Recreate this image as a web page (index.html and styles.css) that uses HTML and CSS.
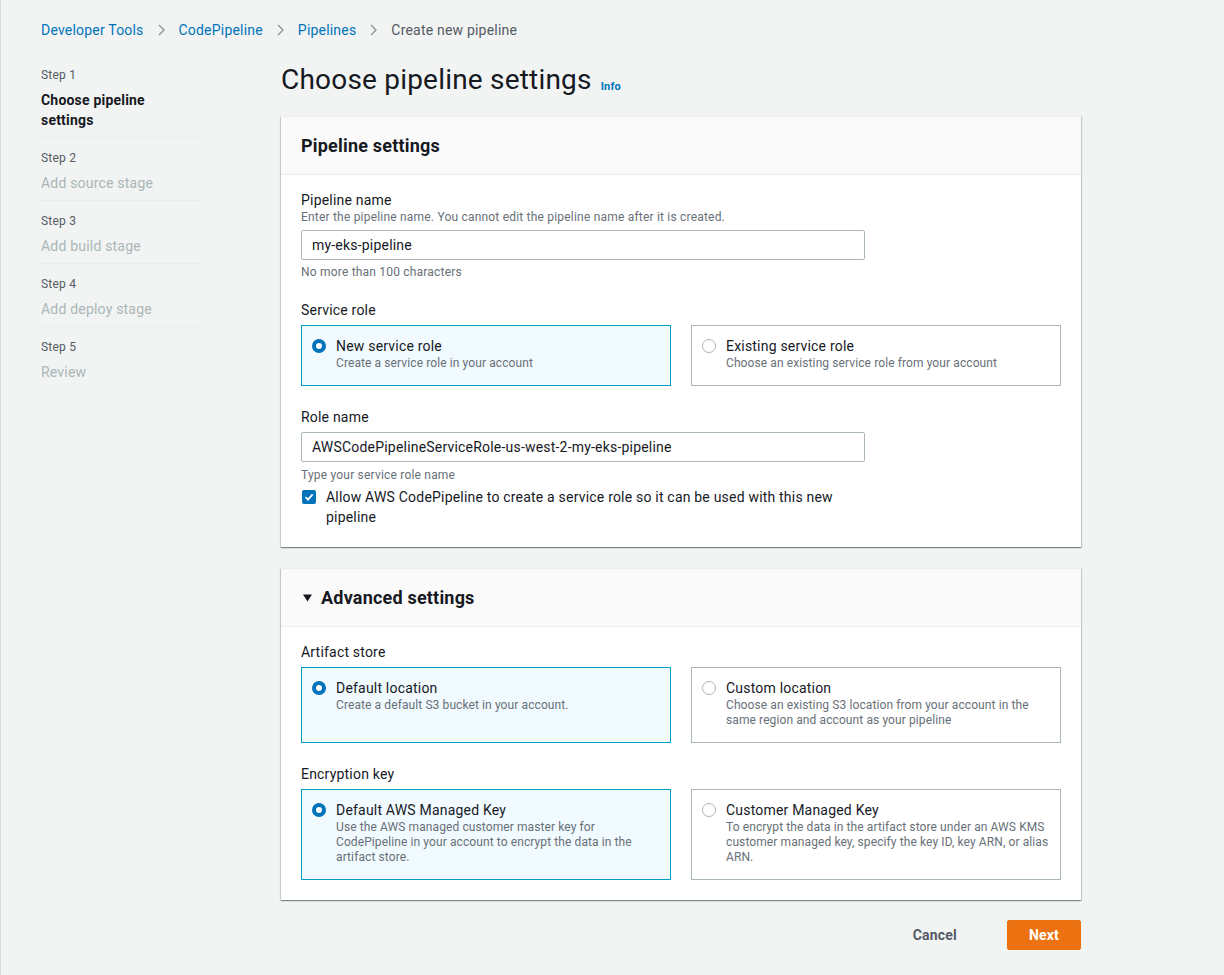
FILE: index.html
```html
<!DOCTYPE html>
<html lang="en">
<head>
  <meta charset="UTF-8">
  <meta name="viewport" content="width=device-width, initial-scale=1.0">
  <title>Create new pipeline</title>
  <link rel="stylesheet" href="styles.css">
</head>
<body>

<div class="app">
  <nav class="crumbs">
    <a href="#">Developer Tools</a>
    <svg class="chev" width="7" height="12" viewBox="0 0 7 12"><polyline points="1,1 6,6 1,11" fill="none" stroke="#879596" stroke-width="1.3"/></svg>
    <a href="#">CodePipeline</a>
    <svg class="chev" width="7" height="12" viewBox="0 0 7 12"><polyline points="1,1 6,6 1,11" fill="none" stroke="#879596" stroke-width="1.3"/></svg>
    <a href="#">Pipelines</a>
    <svg class="chev" width="7" height="12" viewBox="0 0 7 12"><polyline points="1,1 6,6 1,11" fill="none" stroke="#879596" stroke-width="1.3"/></svg>
    <span class="current">Create new pipeline</span>
  </nav>

  <div class="layout">
    <ul class="steps">
      <li class="step active">
        <div class="step-num">Step 1</div>
        <div class="step-title">Choose pipeline settings</div>
      </li>
      <li class="step">
        <div class="step-num">Step 2</div>
        <div class="step-title">Add source stage</div>
      </li>
      <li class="step">
        <div class="step-num">Step 3</div>
        <div class="step-title">Add build stage</div>
      </li>
      <li class="step">
        <div class="step-num">Step 4</div>
        <div class="step-title">Add deploy stage</div>
      </li>
      <li class="step last">
        <div class="step-num">Step 5</div>
        <div class="step-title">Review</div>
      </li>
    </ul>

    <main class="main">
      <h1 class="page-title">Choose pipeline settings <a class="info" href="#">Info</a></h1>

      <section class="panel">
        <div class="panel-head"><h2>Pipeline settings</h2></div>
        <div class="panel-body">
          <div class="field-label">Pipeline name</div>
          <div class="field-desc">Enter the pipeline name. You cannot edit the pipeline name after it is created.</div>
          <input class="text-input" type="text" value="my-eks-pipeline">
          <div class="field-hint">No more than 100 characters</div>

          <div class="field-label spaced">Service role</div>
          <div class="tiles">
            <label class="tile selected">
              <span class="radio on"></span>
              <span class="tile-text">
                <span class="tile-title">New service role</span>
                <span class="tile-desc">Create a service role in your account</span>
              </span>
            </label>
            <label class="tile">
              <span class="radio"></span>
              <span class="tile-text">
                <span class="tile-title">Existing service role</span>
                <span class="tile-desc">Choose an existing service role from your account</span>
              </span>
            </label>
          </div>

          <div class="field-label spaced">Role name</div>
          <input class="text-input gap-top" type="text" value="AWSCodePipelineServiceRole-us-west-2-my-eks-pipeline">
          <div class="field-hint loose">Type your service role name</div>
          <label class="check-row">
            <span class="checkbox">
              <svg width="10" height="10" viewBox="0 0 10 10"><polyline points="1.5,5.2 4,7.6 8.6,2.4" fill="none" stroke="#fff" stroke-width="1.8"/></svg>
            </span>
            <span class="check-text">Allow AWS CodePipeline to create a service role so it can be used with this new pipeline</span>
          </label>
        </div>
      </section>

      <section class="panel">
        <div class="panel-head">
          <h2>
            <svg class="caret" width="9" height="8" viewBox="0 0 9 8"><polygon points="0,0.5 9,0.5 4.5,7.5" fill="#16191f"/></svg>
            Advanced settings
          </h2>
        </div>
        <div class="panel-body">
          <div class="field-label">Artifact store</div>
          <div class="tiles">
            <label class="tile selected">
              <span class="radio on"></span>
              <span class="tile-text">
                <span class="tile-title">Default location</span>
                <span class="tile-desc">Create a default S3 bucket in your account.</span>
              </span>
            </label>
            <label class="tile">
              <span class="radio"></span>
              <span class="tile-text">
                <span class="tile-title">Custom location</span>
                <span class="tile-desc">Choose an existing S3 location from your account in the same region and account as your pipeline</span>
              </span>
            </label>
          </div>

          <div class="field-label spaced">Encryption key</div>
          <div class="tiles">
            <label class="tile selected">
              <span class="radio on"></span>
              <span class="tile-text">
                <span class="tile-title">Default AWS Managed Key</span>
                <span class="tile-desc">Use the AWS managed customer master key for CodePipeline in your account to encrypt the data in the artifact store.</span>
              </span>
            </label>
            <label class="tile">
              <span class="radio"></span>
              <span class="tile-text">
                <span class="tile-title">Customer Managed Key</span>
                <span class="tile-desc">To encrypt the data in the artifact store under an AWS KMS customer managed key, specify the key ID, key ARN, or alias ARN.</span>
              </span>
            </label>
          </div>
        </div>
      </section>

      <div class="actions">
        <button class="btn-link">Cancel</button>
        <button class="btn-primary">Next</button>
      </div>
    </main>
  </div>
</div>

</body>
</html>
```

FILE: styles.css
```css
* {
  box-sizing: border-box;
}
body {
  margin: 0;
  background-color: #f2f3f3;
  font-family: Roboto, "Liberation Sans", Arial, sans-serif;
  color: #16191f;
  font-size: 14px;
  letter-spacing: 0.2px;
}
.app {
  min-height: 100vh;
  border-left: 1px solid #d5dbdb;
  padding: 20px 0 40px 40px;
}
a {
  color: #0073bb;
  text-decoration: none;
}

/* breadcrumbs */
.crumbs {
  display: flex;
  align-items: center;
  height: 20px;
  line-height: 20px;
}
.chev {
  margin: 0 14px 0 14px;
}
.crumbs .current {
  color: #545b64;
}

.layout {
  display: grid;
  grid-template-columns: 160px 800px;
  column-gap: 80px;
  margin-top: 22px;
}

/* wizard steps */
.steps {
  list-style: none;
  margin: 0;
  padding: 5px 0 0 0;
}
.step {
  padding: 12px 0 7px 0;
  border-bottom: 1px solid #eaeded;
}
.step.active {
  padding-top: 0;
}
.step.last {
  border-bottom: 0;
}
.step-num {
  font-size: 12px;
  line-height: 16px;
  color: #545b64;
}
.step-title {
  margin-top: 7px;
  line-height: 20px;
  color: #aab7b8;
}
.step.active .step-title {
  color: #16191f;
  font-weight: 700;
  padding-right: 20px;
}

/* main */
.page-title {
  margin: 0;
  font-size: 28px;
  font-weight: 400;
  line-height: 36px;
  height: 36px;
  display: flex;
  align-items: baseline;
}
.info {
  font-size: 11px;
  font-weight: 700;
  margin-left: 9px;
  position: relative;
  top: 1px;
}
.panel {
  margin-top: 18px;
  background: #fff;
  border-top: 1px solid #eaeded;
  box-shadow: 0 1px 1px 0 rgba(0, 28, 36, 0.3), 1px 1px 1px 0 rgba(0, 28, 36, 0.15), -1px 1px 1px 0 rgba(0, 28, 36, 0.15);
}
.panel + .panel {
  margin-top: 21px;
}
.panel-head {
  height: 58px;
  background: #fafafa;
  border-bottom: 1px solid #eaeded;
  padding: 0 20px;
  display: flex;
  align-items: center;
}
.panel-head h2 {
  margin: 0;
  font-size: 18px;
  font-weight: 700;
  line-height: 22px;
  display: flex;
  align-items: center;
}
.caret {
  margin: 0 9px 0 2px;
}
.panel-body {
  padding: 15px 20px 20px 20px;
}
.field-label {
  line-height: 20px;
}
.field-label.spaced {
  margin-top: 20px;
}
.field-desc {
  font-size: 12px;
  line-height: 14px;
  color: #687078;
}
.text-input {
  display: block;
  width: 564px;
  height: 30px;
  margin-top: 6px;
  padding: 0 10px;
  border: 1px solid #aab7b8;
  border-radius: 2px;
  font-family: inherit;
  font-size: 14px;
  letter-spacing: 0.2px;
  color: #16191f;
  background: #fff;
}
.text-input.gap-top {
  margin-top: 5px;
}
.field-hint {
  margin-top: 4px;
  font-size: 12px;
  line-height: 16px;
  color: #687078;
}
.field-hint.loose {
  margin-top: 5px;
}

/* radio tiles */
.tiles {
  display: grid;
  grid-template-columns: 1fr 1fr;
  column-gap: 20px;
  margin-top: 5px;
}
.tiles + .field-label.spaced {
  margin-top: 21px;
}
.tile {
  display: flex;
  align-items: flex-start;
  padding: 10px 10px 14px 10px;
  border: 1px solid #aab7b8;
  background: #fff;
}
.tile.selected {
  border-color: #00a1c9;
  background: #f1faff;
}
.radio {
  flex: none;
  width: 14px;
  height: 14px;
  margin: 3px 10px 0 0;
  border-radius: 50%;
  border: 1px solid #aab7b8;
  background: #fff;
}
.radio.on {
  border: 4px solid #0073bb;
}
.tile-text {
  display: flex;
  flex-direction: column;
}
.tile-title {
  line-height: 20px;
}
.tile-desc {
  font-size: 12px;
  line-height: 15px;
  letter-spacing: 0.1px;
  color: #687078;
}

/* checkbox */
.check-row {
  display: flex;
  align-items: flex-start;
  margin-top: 4px;
  max-width: 564px;
}
.checkbox {
  flex: none;
  width: 14px;
  height: 14px;
  margin: 3px 10px 0 1px;
  border-radius: 2px;
  background: #0073bb;
  display: flex;
  align-items: center;
  justify-content: center;
}
.check-text {
  line-height: 20px;
  max-width: 540px;
}

/* footer buttons */
.actions {
  display: flex;
  justify-content: flex-end;
  align-items: center;
  margin-top: 20px;
  gap: 30px;
}
.btn-link,
.btn-primary {
  font-family: inherit;
  font-size: 14px;
  font-weight: 700;
  letter-spacing: 0.2px;
  height: 30px;
  border-radius: 2px;
  cursor: pointer;
}
.btn-link {
  border: 0;
  background: none;
  color: #545b64;
  padding: 0 20px;
}
.btn-primary {
  width: 74px;
  border: 1px solid #ec7211;
  background: #ec7211;
  color: #fff;
}
```
